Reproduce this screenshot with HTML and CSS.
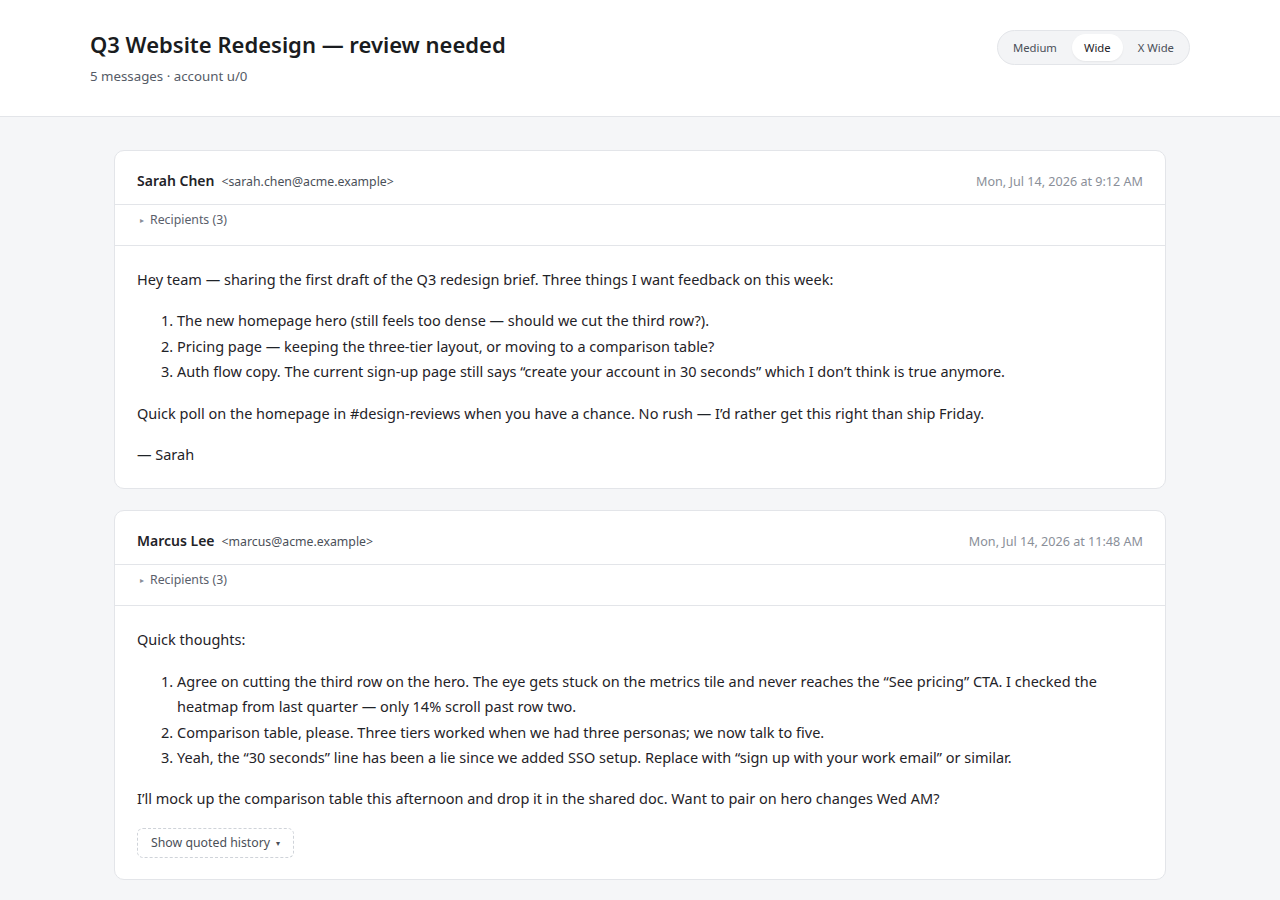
FILE: index.html
```html
<!DOCTYPE html>
<html lang="en">
<head>
<meta charset="utf-8">
<title>Q3 Website Redesign — review needed</title>
<link rel="stylesheet" href="styles.css">
</head>
<body>
<header class="top">
  <div class="top-text">
    <h1 class="title">Q3 Website Redesign — review needed</h1>
    <div class="subtitle">5 messages · account u/0</div>
  </div>
  <div class="seg">
    <button class="seg-btn">Medium</button>
    <button class="seg-btn active">Wide</button>
    <button class="seg-btn">X Wide</button>
  </div>
</header>
<main class="thread">
  <article class="card">
    <div class="card-head">
      <div class="from"><span class="name">Sarah Chen</span><span class="email">&lt;sarah.chen@acme.example&gt;</span></div>
      <div class="date">Mon, Jul 14, 2026 at 9:12 AM</div>
    </div>
    <div class="recip"><span class="tri">&#9656;</span>Recipients (3)</div>
    <div class="card-body">
      <p>Hey team — sharing the first draft of the Q3 redesign brief. Three things I want feedback on this week:</p>
      <ol>
        <li>The new homepage hero (still feels too dense — should we cut the third row?).</li>
        <li>Pricing page — keeping the three-tier layout, or moving to a comparison table?</li>
        <li>Auth flow copy. The current sign-up page still says “create your account in 30 seconds” which I don’t think is true anymore.</li>
      </ol>
      <p>Quick poll on the homepage in #design-reviews when you have a chance. No rush — I’d rather get this right than ship Friday.</p>
      <p>— Sarah</p>
    </div>
  </article>
  <article class="card">
    <div class="card-head">
      <div class="from"><span class="name">Marcus Lee</span><span class="email">&lt;marcus@acme.example&gt;</span></div>
      <div class="date">Mon, Jul 14, 2026 at 11:48 AM</div>
    </div>
    <div class="recip"><span class="tri">&#9656;</span>Recipients (3)</div>
    <div class="card-body">
      <p>Quick thoughts:</p>
      <ol>
        <li>Agree on cutting the third row on the hero. The eye gets stuck on the metrics tile and never reaches the “See pricing” CTA. I checked the heatmap from last quarter — only 14% scroll past row two.</li>
        <li>Comparison table, please. Three tiers worked when we had three personas; we now talk to five.</li>
        <li>Yeah, the “30 seconds” line has been a lie since we added SSO setup. Replace with “sign up with your work email” or similar.</li>
      </ol>
      <p>I’ll mock up the comparison table this afternoon and drop it in the shared doc. Want to pair on hero changes Wed AM?</p>
      <button class="quoted">Show quoted history <span class="caret">&#9662;</span></button>
    </div>
  </article>
</main>
</body>
</html>
```

FILE: styles.css
```css
* { box-sizing: border-box; }
html, body { margin: 0; padding: 0; }
body {
  font-family: "Noto Sans", "Open Sans", sans-serif;
  color: #1f2328;
  background: #f5f6f8;
  min-height: 900px;
}
.top {
  background: #ffffff;
  border-bottom: 1px solid #e3e5e9;
  padding: 28px 90px 30px;
  display: flex;
  justify-content: space-between;
  align-items: flex-start;
}
.title {
  margin: 0;
  font-size: 22px;
  line-height: 32px;
  font-weight: 600;
  color: #1a1c20;
}
.subtitle {
  margin-top: 6px;
  font-size: 13.3px;
  line-height: 20px;
  color: #555b66;
}
.seg {
  margin-top: 2px;
  display: flex;
  gap: 3px;
  padding: 3px;
  border: 1px solid #e3e5e9;
  border-radius: 18px;
  background: #f3f4f6;
}
.seg-btn {
  font-family: inherit;
  font-size: 11.3px;
  line-height: 17px;
  padding: 5px 12px;
  border: 0;
  border-radius: 14px;
  background: transparent;
  color: #4a4f58;
}
.seg-btn.active {
  background: #ffffff;
  color: #1f2328;
  box-shadow: 0 1px 2px rgba(0,0,0,0.06);
}
.thread {
  padding: 33px 0 20px;
  display: flex;
  flex-direction: column;
  align-items: center;
  gap: 21px;
}
.card {
  width: 1052px;
  background: #ffffff;
  border: 1px solid #e3e5e9;
  border-radius: 10px;
}
.card-head {
  display: flex;
  justify-content: space-between;
  align-items: baseline;
  padding: 18px 22px 13px;
  border-bottom: 1px solid #e3e5e9;
}
.name {
  font-size: 14px;
  font-weight: 600;
  line-height: 20px;
  color: #1f2328;
}
.email {
  margin-left: 7px;
  font-size: 12.3px;
  color: #4a4f58;
}
.date {
  font-size: 12.6px;
  color: #8a8f99;
}
.recip {
  padding: 7px 22px 18px;
  font-size: 12.3px;
  line-height: 15px;
  color: #5a606b;
  border-bottom: 1px solid #e3e5e9;
}
.tri {
  font-size: 8px;
  color: #8a8f99;
  margin-left: 3px;
  margin-right: 6px;
  vertical-align: 1px;
}
.card-body {
  padding: 21px 22px 21px;
  font-size: 14.5px;
  line-height: 25.4px;
  color: #1f2328;
}
.card-body p { margin: 0 0 16px; }
.card-body p:last-child { margin-bottom: 0; }
.card-body ol {
  margin: 0 0 16px;
  padding-left: 40px;
}
.quoted {
  display: block;
  margin: 0;
  font-family: inherit;
  font-size: 12.3px;
  line-height: 16px;
  padding: 6px 13px;
  border: 1px dashed #cfd3d9;
  border-radius: 6px;
  background: #ffffff;
  color: #4a4f58;
}
.caret { font-size: 8px; margin-left: 3px; vertical-align: 1px; }
```
